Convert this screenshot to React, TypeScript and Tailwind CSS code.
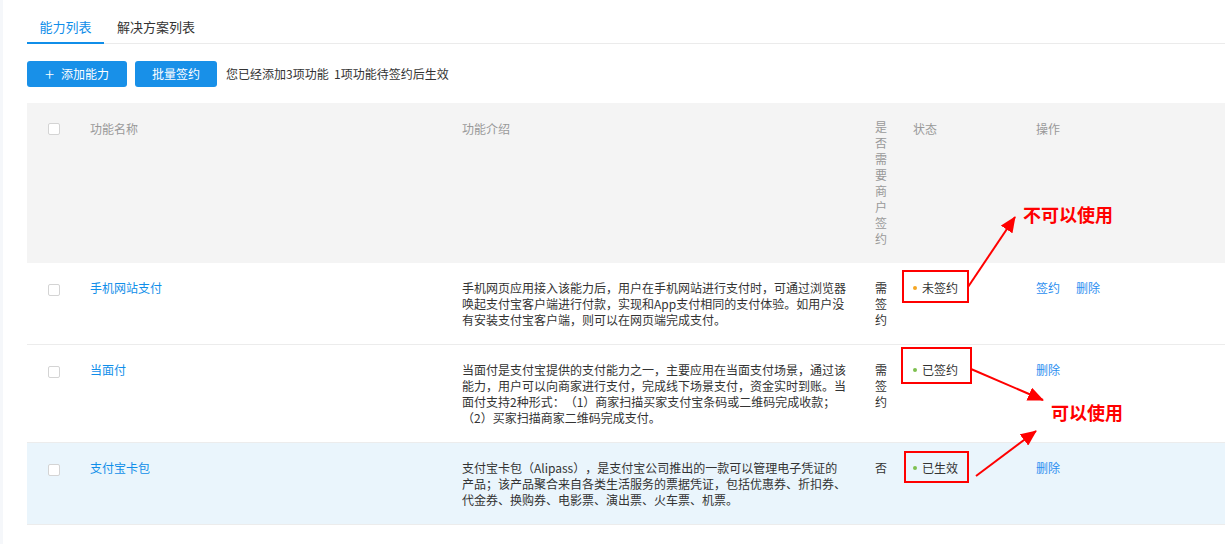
import React from 'react'

const rows = [
  {
    name: '手机网站支付',
    desc: [
      '手机网页应用接入该能力后，用户在手机网站进行支付时，可通过浏览器',
      '唤起支付宝客户端进行付款，实现和App支付相同的支付体验。如用户没',
      '有安装支付宝客户端，则可以在网页端完成支付。',
    ],
    sign: '需签约',
    status: '未签约',
    dot: 'bg-[#f5a623]',
    ops: ['签约', '删除'],
    active: false,
  },
  {
    name: '当面付',
    desc: [
      '当面付是支付宝提供的支付能力之一，主要应用在当面支付场景，通过该',
      '能力，用户可以向商家进行支付，完成线下场景支付，资金实时到账。当',
      '面付支持2种形式：（1）商家扫描买家支付宝条码或二维码完成收款；',
      '（2）买家扫描商家二维码完成支付。',
    ],
    sign: '需签约',
    status: '已签约',
    dot: 'bg-[#7ec050]',
    ops: ['删除'],
    active: false,
  },
  {
    name: '支付宝卡包',
    desc: [
      '支付宝卡包（Alipass），是支付宝公司推出的一款可以管理电子凭证的',
      '产品；该产品聚合来自各类生活服务的票据凭证，包括优惠券、折扣券、',
      '代金券、换购券、电影票、演出票、火车票、机票。',
    ],
    sign: '否',
    status: '已生效',
    dot: 'bg-[#7ec050]',
    ops: ['删除'],
    active: true,
  },
]

function Checkbox() {
  return (
    <span className="block w-[12px] h-[12px] rounded-[2px] border border-[#d4d4d4] bg-white" />
  )
}

export default function App() {
  return (
    <div className="relative w-[1225px] h-[544px] overflow-hidden bg-white border-l-[3px] border-[#f5f7fa] font-['Noto_Sans_CJK_SC',sans-serif] text-[12px] text-[#333] [text-spacing-trim:space-all]">
      <div className="pl-[24px] pt-[17px]">
        {/* TABS */}
        <div className="flex border-b border-[#ebebeb] text-[13px] leading-[20px]">
          <div className="w-[77px] text-center text-[#108ee9] border-b-2 border-[#108ee9] pb-[5px] -mb-px">
            能力列表
          </div>
          <div className="pl-[13px] pb-[5px] text-[#333]">解决方案列表</div>
        </div>

        {/* TOOLBAR */}
        <div className="flex items-center mt-[17px]">
          <button className="w-[100px] h-[26px] rounded-[3px] bg-[#1890e8] text-white text-[12px] flex items-center justify-center gap-[7px]">
            <span className="text-[17px] leading-none font-light -mt-[2px]">+</span>
            添加能力
          </button>
          <button className="ml-[8px] w-[82px] h-[26px] rounded-[3px] bg-[#1890e8] text-white text-[12px]">
            批量签约
          </button>
          <span className="ml-[9px]">您已经添加3项功能&nbsp;&nbsp;1项功能待签约后生效</span>
        </div>

        {/* TABLE */}
        <table className="mt-[16px] w-[1198px] table-fixed border-collapse">
          <colgroup>
            <col className="w-[43px]" />
            <col className="w-[372px]" />
            <col className="w-[413px]" />
            <col className="w-[38px]" />
            <col className="w-[123px]" />
            <col />
          </colgroup>
          <thead>
            <tr className="bg-[#f4f4f4] text-[#999] leading-[16px] align-top">
              <th className="pl-[21px] pt-[20px] font-normal text-left">
                <Checkbox />
              </th>
              <th className="pl-[20px] py-[18px] font-normal text-left">功能名称</th>
              <th className="pl-[20px] py-[18px] font-normal text-left">功能介绍</th>
              <th className="pl-[20px] pr-[6px] py-[16px] font-normal text-left">
                是否需要商户签约
              </th>
              <th className="pl-[20px] py-[18px] font-normal text-left">状态</th>
              <th className="pl-[20px] py-[18px] font-normal text-left">操作</th>
            </tr>
          </thead>
          <tbody>
            {rows.map((row) => (
              <tr
                key={row.name}
                className={`align-top leading-[16px] border-b border-[#ececec] ${
                  row.active ? 'bg-[#eaf5fc]' : 'bg-white'
                }`}
              >
                <td className="pl-[21px] pt-[21px]">
                  <Checkbox />
                </td>
                <td className="pl-[20px] pt-[17px] pb-[16px] text-[#108ee9]">{row.name}</td>
                <td className="pl-[20px] pt-[17px] pb-[16px]">
                  {row.desc.map((line) => (
                    <div key={line} className="whitespace-nowrap">
                      {line}
                    </div>
                  ))}
                </td>
                <td className="pl-[20px] pr-[6px] pt-[17px] pb-[16px]">{row.sign}</td>
                <td className="pl-[20px] pt-[17px] pb-[16px]">
                  <div className="flex items-center gap-[5px]">
                    <span className={`w-[4px] h-[4px] rounded-full ${row.dot}`} />
                    {row.status}
                  </div>
                </td>
                <td className="pl-[20px] pt-[17px] pb-[16px]">
                  <div className="flex gap-[16px] text-[#2b8ef0]">
                    {row.ops.map((op) => (
                      <span key={op}>{op}</span>
                    ))}
                  </div>
                </td>
              </tr>
            ))}
          </tbody>
        </table>
      </div>

      {/* ANNOTATIONS */}
      <svg
        className="absolute left-[-3px] top-0 pointer-events-none"
        width="1225"
        height="544"
      >
        <defs>
          <marker
            id="arrow"
            markerUnits="userSpaceOnUse"
            markerWidth="16"
            markerHeight="14"
            viewBox="0 0 16 14"
            refX="15"
            refY="7"
            orient="auto"
          >
            <path d="M0,0 L16,7 L0,14 z" fill="#ff0000" />
          </marker>
        </defs>
        <g fill="none" stroke="#ff0000" strokeWidth="2">
          <rect x="903" y="271" width="65" height="31" />
          <rect x="902" y="348" width="69" height="35" />
          <rect x="905" y="452" width="63" height="30" />
          <line x1="968" y1="287" x2="1015" y2="217" markerEnd="url(#arrow)" />
          <line x1="971" y1="369" x2="1043" y2="400" markerEnd="url(#arrow)" />
          <line x1="976" y1="476" x2="1036" y2="431" markerEnd="url(#arrow)" />
        </g>
      </svg>
      <div className="absolute left-[1020px] top-[204px] text-[18px] leading-[20px] font-bold text-[#ff0000]">
        不可以使用
      </div>
      <div className="absolute left-[1048px] top-[402px] text-[18px] leading-[20px] font-bold text-[#ff0000]">
        可以使用
      </div>
    </div>
  )
}
